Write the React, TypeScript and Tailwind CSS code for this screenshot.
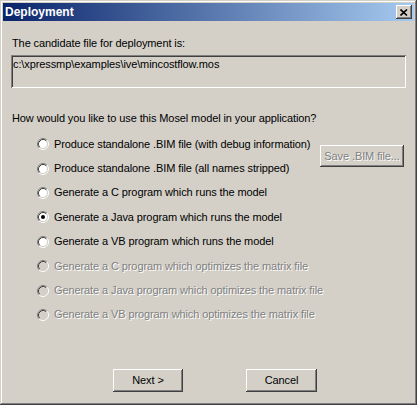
const options = [
  { label: 'Produce standalone .BIM file (with debug information)', checked: false, disabled: false },
  { label: 'Produce standalone .BIM file (all names stripped)', checked: false, disabled: false },
  { label: 'Generate a C program which runs the model', checked: false, disabled: false },
  { label: 'Generate a Java program which runs the model', checked: true, disabled: false },
  { label: 'Generate a VB program which runs the model', checked: false, disabled: false },
  { label: 'Generate a C program which optimizes the matrix file', checked: false, disabled: true },
  { label: 'Generate a Java program which optimizes the matrix file', checked: false, disabled: true },
  { label: 'Generate a VB program which optimizes the matrix file', checked: false, disabled: true },
]

const raised =
  'shadow-[inset_-1px_-1px_#404040,inset_1px_1px_#ffffff,inset_-2px_-2px_#808080,inset_2px_2px_#d4d0c8]'

function Radio({ checked, disabled }: { checked: boolean; disabled: boolean }) {
  return (
    <svg width="12" height="12" viewBox="0 0 12 12" className="shrink-0">
      <circle cx="6" cy="6" r="4.5" fill={disabled ? '#d4d0c8' : '#ffffff'} />
      <path d="M2.11 9.89 A5.5 5.5 0 0 1 9.89 2.11" stroke="#808080" strokeWidth="1" fill="none" />
      <path d="M9.89 2.11 A5.5 5.5 0 0 1 2.11 9.89" stroke="#ffffff" strokeWidth="1" fill="none" />
      <path d="M2.82 9.18 A4.5 4.5 0 0 1 9.18 2.82" stroke="#404040" strokeWidth="1" fill="none" />
      <path d="M9.18 2.82 A4.5 4.5 0 0 1 2.82 9.18" stroke="#d4d0c8" strokeWidth="1" fill="none" />
      {checked && <circle cx="6" cy="6" r="2" fill={disabled ? '#808080' : '#000000'} />}
    </svg>
  )
}

function Option({ label, checked, disabled }: { label: string; checked: boolean; disabled: boolean }) {
  return (
    <label className="h-[24.4px] flex items-center gap-[5px] whitespace-nowrap">
      <Radio checked={checked} disabled={disabled} />
      <span className={disabled ? 'text-[#808080] [text-shadow:1px_1px_0_#ffffff]' : ''}>{label}</span>
    </label>
  )
}

export default function App() {
  return (
    <div
      className={`w-[417px] h-[405px] bg-[#d4d0c8] p-[3px] text-[11px] leading-[13px] tracking-[-0.1px] text-black font-['Liberation_Sans',Arial,sans-serif] shadow-[inset_-1px_-1px_#404040,inset_1px_1px_#d4d0c8,inset_-2px_-2px_#808080,inset_2px_2px_#ffffff]`}
    >
      <div className="h-[18px] flex items-center justify-between pl-[2px] pr-[2px] bg-[linear-gradient(to_right,#0a246a,#a6caf0)]">
        <span className="text-white font-bold text-[12px] tracking-normal">Deployment</span>
        <div className={`w-[16px] h-[14px] bg-[#d4d0c8] flex items-center justify-center ${raised}`}>
          <svg width="8" height="7" viewBox="0 0 8 7">
            <path d="M0.5 0.5 L7 6.5 M7 0.5 L0.5 6.5" stroke="#000" strokeWidth="1.6" />
          </svg>
        </div>
      </div>

      <div className="px-[8px]">
        <p className="mt-[16px] pl-[1px]">The candidate file for deployment is:</p>
        <div className="mt-[5px] h-[33px] bg-[#d4d0c8] pl-[2px] pt-[3px] shadow-[inset_1px_1px_#808080,inset_-1px_-1px_#ffffff,inset_2px_2px_#404040,inset_-2px_-2px_#d4d0c8]">
          c:\xpressmp\examples\ive\mincostflow.mos
        </div>

        <p className="mt-[24px] pl-[1px]">How would you like to use this Mosel model in your application?</p>

        <div className="mt-[7px] pl-[26px]">
          <div className="flex">
            <div className="flex flex-col">
              {options.slice(0, 2).map((o) => (
                <Option key={o.label} {...o} />
              ))}
            </div>
            <div
              className={`ml-auto mr-[2px] mt-[13px] w-[84px] h-[22px] flex items-center justify-center text-[#808080] [text-shadow:1px_1px_0_#ffffff] ${raised}`}
            >
              Save .BIM file...
            </div>
          </div>
          {options.slice(2).map((o) => (
            <Option key={o.label} {...o} />
          ))}
        </div>

        <div className="flex gap-[63px] ml-[102px] mt-[42px]">
          <button className={`w-[70px] h-[23px] bg-[#d4d0c8] ${raised}`}>Next &gt;</button>
          <button className={`w-[71px] h-[23px] bg-[#d4d0c8] ${raised}`}>Cancel</button>
        </div>
      </div>
    </div>
  )
}
